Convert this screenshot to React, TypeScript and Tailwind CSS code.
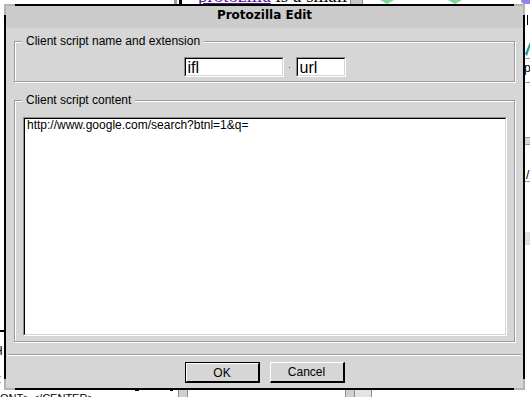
import React from 'react'

// ── Page behind the dialog: only the edges peek out ──────────────────────

function TopStrip() {
  return (
    <div className="col-span-3 flex h-[4px] overflow-hidden">
      <div className="w-[174px] shrink-0" />
      <div className="w-[3px] shrink-0 bg-[#9a9a9a]" />
      <div className="w-[2px] shrink-0" />
      <div className="w-[3px] shrink-0 bg-black" />
      <div className="w-[16px] shrink-0" />
      <div className="w-[152px] shrink-0 overflow-hidden">
        <div className="mt-[-14px] whitespace-nowrap font-['Liberation_Serif',serif] text-[19px] leading-[20px]">
          <span className="text-[#551a8b] underline">protozilla</span> is a small
        </div>
      </div>
      <div className="w-[13px] shrink-0 bg-[#c8c8c8] border-x border-[#8a8a8a]" />
      <div className="flex-1 flex items-start">
        <svg className="ml-[15px]" width="18" height="4" viewBox="0 0 18 4">
          <path d="M2 0 L9 4 L16 0 Z" fill="#7fd69a" />
        </svg>
        <svg className="ml-[50px]" width="18" height="4" viewBox="0 0 18 4">
          <path d="M2 0 L9 4 L16 0 Z" fill="#7fd69a" />
        </svg>
      </div>
      <div className="w-[9px] shrink-0 bg-[#8a8ae6] rounded-bl-full" />
    </div>
  )
}

function LeftStrip() {
  return (
    <div className="flex flex-col overflow-hidden text-[12px] leading-[12px]">
      <div className="h-[326px] shrink-0" />
      <div className="h-[2px] shrink-0 bg-black" />
      <div className="h-[5px] shrink-0" />
      <div className="ml-[-4px] h-[8px] shrink-0 overflow-hidden">-</div>
      <div className="ml-[-6px] h-[14px] shrink-0 overflow-hidden">H</div>
      <div className="h-[14px] shrink-0" />
      <div className="ml-[-2px] h-[12px] shrink-0 overflow-hidden">:</div>
    </div>
  )
}

function RightStrip() {
  return (
    <div className="flex flex-col overflow-hidden text-[12px] leading-[12px]">
      <div className="h-[11px] shrink-0" />
      <div className="ml-[2px] w-[1px] h-[10px] shrink-0 bg-black" />
      <div className="h-[13px] shrink-0" />
      <svg className="shrink-0" width="5" height="18" viewBox="0 0 5 18">
        <path d="M0 16 L5 4 L5 9 L2 18 Z" fill="#1a9a9a" />
      </svg>
      <div className="h-[2px] shrink-0" />
      <div className="h-[1px] shrink-0 bg-[#9a9a9a]" />
      <div className="h-[3px] shrink-0" />
      <div className="ml-[-1px] h-[20px] shrink-0">pl</div>
      <div className="h-[1px] shrink-0 bg-[#9a9a9a]" />
      <div className="h-[54px] shrink-0" />
      <div className="h-[8px] shrink-0 bg-[#d8d8d8] border-y border-[#9a9a9a]" />
      <div className="h-[24px] shrink-0" />
      <div className="ml-[1px] h-[12px] shrink-0">/</div>
      <div className="h-[1px] shrink-0 bg-[#9a9a9a]" />
      <div className="h-[50px] shrink-0" />
      <div className="h-[13px] shrink-0 bg-[#e0e0e0]" />
    </div>
  )
}

function BottomStrip() {
  return (
    <div className="col-span-3 flex h-[7px] overflow-hidden">
      <div className="w-[135px] shrink-0 overflow-hidden">
        <div className="mt-[2px] whitespace-nowrap text-[11px] leading-[13px]">ONT&gt; &lt;/CENTER&gt;</div>
      </div>
      <div className="w-[4px] h-[1px] shrink-0 bg-black" />
      <div className="w-[31px] shrink-0" />
      <div className="w-[3px] h-[1px] shrink-0 bg-black" />
      <div className="w-[5px] shrink-0" />
      <div className="w-[10px] shrink-0 bg-[#d0d0d0] border-x border-[#8a8a8a]" />
      <div className="w-[157px] shrink-0" />
      <div className="w-[10px] shrink-0 bg-[#d0d0d0] border-x border-[#8a8a8a]" />
      <div className="w-[17px] shrink-0 bg-[#e4e4e4] border-r border-[#8a8a8a]" />
    </div>
  )
}

// ── Bits of the dialog ────────────────────────────────────────────────────

function Sunken({ className, children }: { className: string; children?: React.ReactNode }) {
  return (
    <div className={`border border-t-[#8e8e8e] border-l-[#8e8e8e] border-r-white border-b-white ${className}`}>
      <div className="h-full overflow-hidden bg-white border border-t-black border-l-black border-r-[#d6d6d6] border-b-[#d6d6d6]">
        {children}
      </div>
    </div>
  )
}

function GroupBox({ label, className, children }: { label: string; className: string; children: React.ReactNode }) {
  return (
    <div className={`relative border border-[#9c9c9c] shadow-[inset_1px_1px_0_#ffffff,1px_1px_0_#ffffff] ${className}`}>
      <span className="absolute left-[7px] top-[-8px] px-[4px] bg-[#d6d6d6] leading-[14px] whitespace-nowrap">
        {label}
      </span>
      {children}
    </div>
  )
}

function Corner({ className }: { className: string }) {
  return <div className={`absolute w-[11px] h-[11px] border-[#b4b4b4] ${className}`} />
}

// ── Dialog ────────────────────────────────────────────────────────────────

function Dialog() {
  return (
    <div className="relative border-2 border-black bg-[#d6d6d6] flex flex-col">
      <Corner className="left-[-2px] top-[-2px] border-t-2 border-l-2" />
      <Corner className="right-[-2px] top-[-2px] border-t-2 border-r-2" />
      <Corner className="left-[-2px] bottom-[-2px] border-b-2 border-l-2" />
      <Corner className="right-[-2px] bottom-[-2px] border-b-2 border-r-2" />

      <div className="h-[22px] bg-[#cccccc] pt-[2px] text-center font-['DejaVu_Sans',sans-serif] font-bold text-[12px] leading-[14px]">
        Protozilla Edit
      </div>

      <div className="flex-1 flex flex-col pt-[13px]">
        <div className="px-[8px] flex flex-col">
          <GroupBox label="Client script name and extension" className="pt-[15px] pb-[4px]">
            <div className="flex justify-center items-center">
              <Sunken className="w-[100px] h-[20px]">
                <div className="pl-[2px] pt-[1px] text-[16px] leading-[16px]">ifl</div>
              </Sunken>
              <div className="w-[12px] flex justify-center">
                <div className="w-[1px] h-[1px] bg-[#555555]" />
              </div>
              <Sunken className="w-[50px] h-[20px]">
                <div className="pl-[2px] pt-[1px] text-[16px] leading-[16px]">url</div>
              </Sunken>
            </div>
          </GroupBox>

          <GroupBox label="Client script content" className="mt-[18px] pt-[16px] pb-[5px] pl-[8px] pr-[7px]">
            <Sunken className="h-[219px]">
              <div className="pl-[2px] leading-[12px] whitespace-nowrap">http://www.google.com/search?btnl=1&amp;q=</div>
            </Sunken>
          </GroupBox>
        </div>

        <div className="mt-[12px] mx-[2px] border-t border-b border-t-[#9c9c9c] border-b-white" />

        <div className="mt-[6px] flex justify-center gap-[10px]">
          <div className="w-[75px] h-[21px] border border-black">
            <div className="h-full flex items-center justify-center border border-t-white border-l-white border-r-black border-b-black">
              OK
            </div>
          </div>
          <div className="w-[75px] h-[21px] flex items-center justify-center border-t border-l border-r-2 border-b-2 border-t-white border-l-white border-r-black border-b-black">
            Cancel
          </div>
        </div>
      </div>
    </div>
  )
}

export default function App() {
  return (
    <div className="w-[530px] h-[397px] overflow-hidden bg-white grid grid-cols-[4px_521px_5px] grid-rows-[4px_386px_7px] font-['Liberation_Sans',Arial,sans-serif] text-[12px] text-black">
      <TopStrip />
      <LeftStrip />
      <Dialog />
      <RightStrip />
      <BottomStrip />
    </div>
  )
}
